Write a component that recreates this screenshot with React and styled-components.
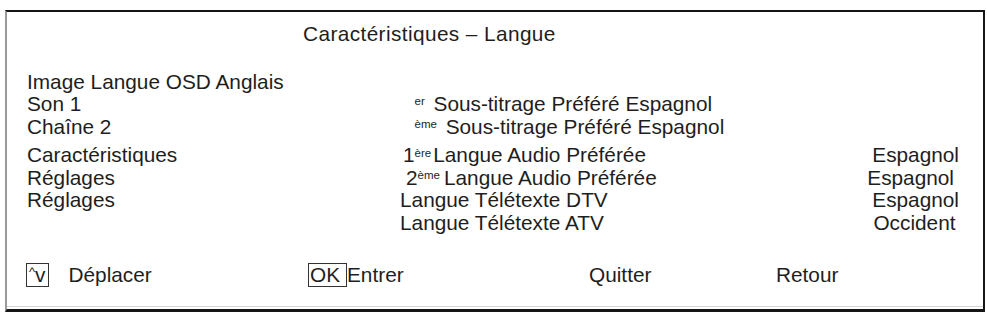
import React from 'react'
import styled, { createGlobalStyle } from 'styled-components'

const GlobalStyle = createGlobalStyle`
  html, body {
    margin: 0;
    padding: 0;
    background: #fff;
  }
  body {
    font-family: 'Liberation Sans', Arial, sans-serif;
    color: #1e1e1e;
  }
`

const Screen = styled.div`
  box-sizing: border-box;
  display: flex;
  flex-direction: column;
  width: 980px;
  height: 302px;
  margin: 10px 0 0 5px;
  padding: 11px 24px 0 20px;
  border-top: 2px solid #151515;
  border-right: 2px solid #151515;
  border-bottom: 3px solid #151515;
  border-left: 2px solid #9a9a9a;
  box-shadow: inset 0 -2px 0 #fff, inset 0 -3px 0 #d4d4d4;
  font-size: 20.8px;
  line-height: 22.5px;
`

const Title = styled.div`
  margin-left: 276px;
  height: 22.5px;
  white-space: nowrap;
  letter-spacing: 0.4px;
`

const Group = styled.div`
  display: flex;
  flex-direction: column;
  margin-top: ${p => p.gap}px;
`

const Row = styled.div`
  display: grid;
  grid-template-columns: 373px 1fr auto;
  height: 22.5px;
  white-space: nowrap;
`

const Label = styled.span``

const Setting = styled.span`
  padding-left: ${p => p.indent || 0}px;
`

const Value = styled.span`
  text-align: right;
  padding-right: ${p => p.nudge || 0}px;
`

const Sup = styled.span`
  font-size: 11.5px;
  line-height: 0;
  vertical-align: ${p => p.raise}px;
  margin-right: ${p => p.space || 0}px;
`

const Footer = styled.div`
  display: grid;
  grid-template-columns: 282px 281px 187px 1fr;
  align-items: center;
  height: 24px;
  margin: 29px 0 0 -1px;
`

const Hint = styled.div`
  display: flex;
  align-items: center;
  height: 24px;
`

const Key = styled.span`
  box-sizing: border-box;
  display: inline-flex;
  align-items: center;
  height: 24px;
  min-width: ${p => p.width}px;
  padding: ${p => (p.small ? '0 0 0 2px' : '0 0 0 1px')};
  border: 1px solid #333;
  line-height: 22px;
  margin-right: ${p => p.gap}px;
`

const Caret = styled.span`
  align-self: flex-start;
  font-size: 13px;
  line-height: 13px;
  margin-top: 1px;
`

export default function App() {
  return (
    <>
      <GlobalStyle />
      <Screen>
        <Title>Caractéristiques – Langue</Title>

        <Group gap={25}>
          <Row>
            <Label>Image Langue OSD Anglais</Label>
            <Setting />
            <Value />
          </Row>
          <Row>
            <Label>Son 1</Label>
            <Setting indent={14.5}>
              <Sup raise={6} space={3}>er</Sup> Sous-titrage Préféré Espagnol
            </Setting>
            <Value />
          </Row>
          <Row>
            <Label>Chaîne 2</Label>
            <Setting indent={14.5}>
              <Sup raise={6} space={3}>ème</Sup> Sous-titrage Préféré Espagnol
            </Setting>
            <Value />
          </Row>
        </Group>

        <Group gap={6}>
          <Row>
            <Label>Caractéristiques</Label>
            <Setting indent={3}>
              1<Sup raise={5.5} space={2}>ère</Sup>Langue Audio Préférée
            </Setting>
            <Value>Espagnol</Value>
          </Row>
          <Row>
            <Label>Réglages</Label>
            <Setting indent={6}>
              2<Sup raise={5.5} space={4}>ème</Sup>Langue Audio Préférée
            </Setting>
            <Value nudge={5}>Espagnol</Value>
          </Row>
          <Row>
            <Label>Réglages</Label>
            <Setting>Langue Télétexte DTV</Setting>
            <Value>Espagnol</Value>
          </Row>
          <Row>
            <Label />
            <Setting>Langue Télétexte ATV</Setting>
            <Value nudge={3.5}>Occident</Value>
          </Row>
        </Group>

        <Footer>
          <Hint>
            <Key small width={23} gap={19.5}>
              <Caret>^</Caret>v
            </Key>
            Déplacer
          </Hint>
          <Hint>
            <Key width={39} gap={0}>OK</Key>
            Entrer
          </Hint>
          <Hint>Quitter</Hint>
          <Hint>Retour</Hint>
        </Footer>
      </Screen>
    </>
  )
}
